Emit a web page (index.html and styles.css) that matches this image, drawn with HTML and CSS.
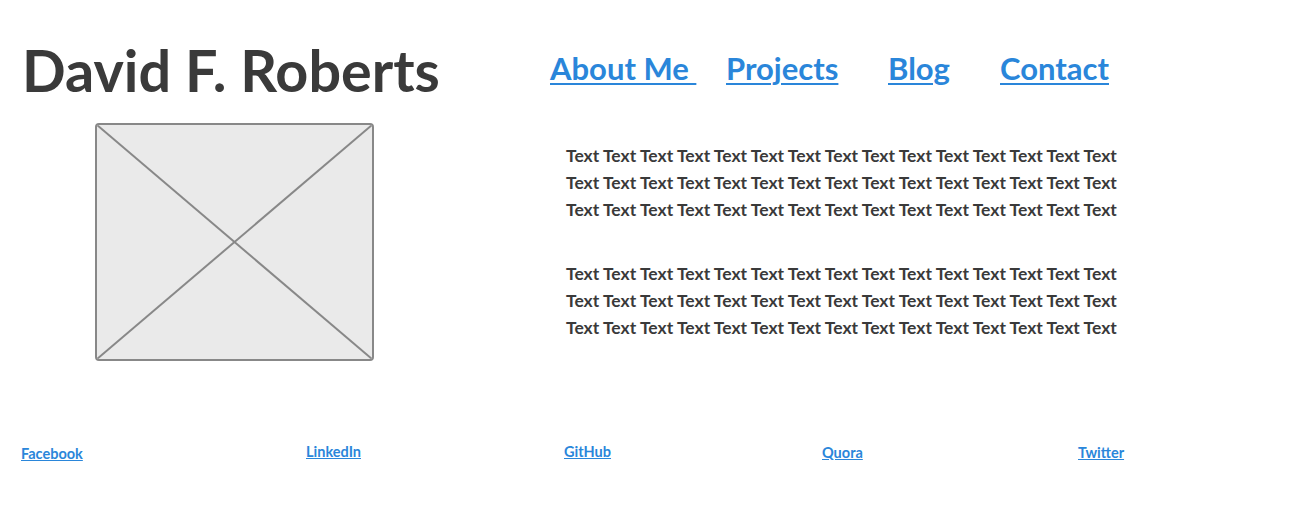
FILE: index.html
```html
<!DOCTYPE html>
<html>
<head>
<meta charset="utf-8">
<title>David F. Roberts</title>
<link rel="stylesheet" href="styles.css">
</head>
<body>
<header class="header">
  <h1 class="title">David F. Roberts</h1>
  <nav class="nav">
    <a href="#" class="nav-link">About Me&nbsp;</a>
    <a href="#" class="nav-link">Projects</a>
    <a href="#" class="nav-link">Blog</a>
    <a href="#" class="nav-link">Contact</a>
  </nav>
</header>
<main class="content">
  <div class="figure">
    <svg class="figure-x" viewBox="0 0 100 100" preserveAspectRatio="none">
      <line x1="0" y1="0" x2="100" y2="100" vector-effect="non-scaling-stroke"/>
      <line x1="100" y1="0" x2="0" y2="100" vector-effect="non-scaling-stroke"/>
    </svg>
  </div>
  <div class="text">
    <p class="para">Text Text Text Text Text Text Text Text Text Text Text Text Text Text Text<br>Text Text Text Text Text Text Text Text Text Text Text Text Text Text Text<br>Text Text Text Text Text Text Text Text Text Text Text Text Text Text Text</p>
    <p class="para">Text Text Text Text Text Text Text Text Text Text Text Text Text Text Text<br>Text Text Text Text Text Text Text Text Text Text Text Text Text Text Text<br>Text Text Text Text Text Text Text Text Text Text Text Text Text Text Text</p>
  </div>
</main>
<footer class="footer">
  <a href="#" class="social s1">Facebook</a>
  <a href="#" class="social s2">LinkedIn</a>
  <a href="#" class="social s3">GitHub</a>
  <a href="#" class="social s4">Quora</a>
  <a href="#" class="social s5">Twitter</a>
</footer>
</body>
</html>
```
FILE: styles.css
```css
* { box-sizing: border-box; }
body {
  margin: 0;
  font-family: Lato, "Open Sans", sans-serif;
  color: #3a3a3a;
  background: #fff;
}
.header {
  display: flex;
  align-items: flex-start;
  padding: 41px 0 0 22px;
}
.title {
  margin: 0;
  width: 528px;
  font-size: 57.5px;
  line-height: 57px;
  font-weight: 700;
  color: #3a3a3a;
}
.nav {
  display: grid;
  grid-template-columns: 176px 162px 112px auto;
  align-items: start;
  margin-top: 12px;
}
.nav-link {
  justify-self: start;
  font-size: 31px;
  line-height: 30px;
  font-weight: 700;
  color: #2a86da;
  text-decoration: underline;
  text-decoration-thickness: 2px;
  text-underline-offset: 3px;
}
.content {
  display: flex;
  align-items: flex-start;
  padding: 25px 0 0 95px;
  height: 345px;
}
.figure {
  width: 279px;
  height: 238px;
  border: 2px solid #888;
  border-radius: 4px;
  background: #eaeaea;
  overflow: hidden;
}
.figure-x {
  display: block;
  width: 100%;
  height: 100%;
}
.figure-x line {
  stroke: #888;
  stroke-width: 2;
}
.text {
  margin-left: 192px;
  padding-top: 19px;
}
.para {
  margin: 0 0 37px;
  font-size: 17.5px;
  line-height: 27px;
  font-weight: 700;
  color: #3a3a3a;
  white-space: nowrap;
}
.footer {
  display: grid;
  grid-template-columns: 285px 258px 258px 256px auto;
  align-items: start;
  padding: 0 0 0 21px;
}
.social {
  justify-self: start;
  font-size: 14.5px;
  line-height: 17px;
  font-weight: 700;
  color: #2a86da;
  text-decoration: underline;
}
.s1 { margin-top: 2px; }
.s2 { margin-top: 0; }
.s3 { margin-top: 0; }
.s4 { margin-top: 1px; }
.s5 { margin-top: 1px; }
```
